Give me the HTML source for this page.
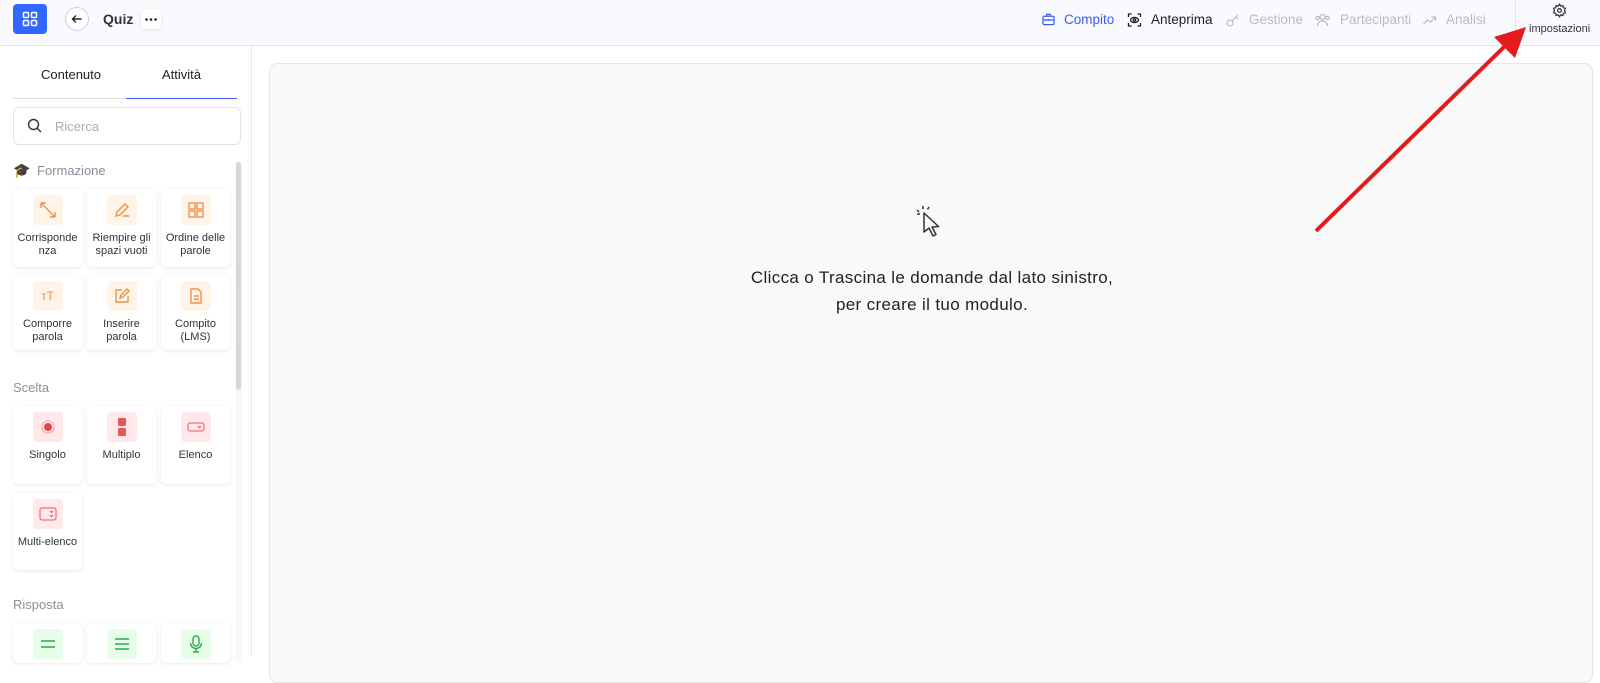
<!DOCTYPE html>
<html><head><meta charset="utf-8"><style>
*{box-sizing:border-box;margin:0;padding:0}
body{width:1600px;height:656px;overflow:hidden;background:#fff;font-family:"Liberation Sans",sans-serif;position:relative;color:#222}
.abs{position:absolute}
.hdr{left:0;top:0;width:1600px;height:46px;background:#fafafe;border-bottom:1px solid #e3e4ea}
.nav{top:12px;font-size:13.5px;display:flex;align-items:center;gap:9px;color:#bbb}
.card{position:absolute;width:69px;background:#fff;border-radius:5px;box-shadow:0 1px 4px rgba(0,0,0,.09);text-align:center;font-size:11px;color:#333;line-height:13px}
.ib{width:30px;height:30px;border-radius:4px;margin:6px auto 7px;display:flex;align-items:center;justify-content:center}
.o{background:#fff4e8}.r{background:#ffe9ea}.g{background:#e6fde9}
.sec{font-size:13px;color:#8a8f9c}
</style></head><body>
<div class="abs hdr"></div>
<div class="abs" style="left:13px;top:4px;width:34px;height:30px;background:#3366ff;border-radius:4px;display:flex;align-items:center;justify-content:center">
<svg width="16" height="16" viewBox="0 0 16 16" fill="none" stroke="#fff" stroke-width="1.5"><rect x="1.5" y="1.5" width="5" height="5" rx="1"/><rect x="9.5" y="1.5" width="5" height="5" rx="1"/><rect x="1.5" y="9.5" width="5" height="5" rx="1"/><rect x="9.5" y="9.5" width="5" height="5" rx="1"/></svg></div>
<div class="abs" style="left:65px;top:7px;width:24px;height:24px;border:1px solid #c9cff8;border-radius:50%;background:#fff;display:flex;align-items:center;justify-content:center"><svg width="12" height="12" viewBox="0 0 12 12" fill="none" stroke="#222" stroke-width="1.4"><path d="M10.5 6H1.5M5 2.5L1.5 6 5 9.5"/></svg></div>
<div class="abs" style="left:103px;top:11px;font-size:14px;font-weight:bold;color:#333">Quiz</div>
<div class="abs" style="left:141px;top:9px;width:20px;height:20px;background:#fff;border-radius:4px;box-shadow:0 1px 3px rgba(0,0,0,.1);display:flex;align-items:center;justify-content:center"><svg width="12" height="3"><circle cx="1.5" cy="1.5" r="1.3" fill="#222"/><circle cx="6" cy="1.5" r="1.3" fill="#222"/><circle cx="10.5" cy="1.5" r="1.3" fill="#222"/></svg></div>

<div class="abs nav" style="left:1042px;color:#3a5cf0"><svg width="13" height="13" viewBox="0 0 14 14" fill="none" stroke="#3a5cf0" stroke-width="1.3"><rect x="1" y="3.5" width="12" height="9" rx="1.5"/><path d="M5 3.5V1.5h4v2M1 7.5h12M7 6.5v2"/></svg><span>Compito</span></div>
<div class="abs nav" style="left:1127px;color:#222"><svg width="15" height="14" viewBox="0 0 14 14" fill="none" stroke="#222" stroke-width="1.3"><path d="M1 4V1h3M10 1h3v3M13 10v3h-3M4 13H1v-3"/><ellipse cx="7" cy="7" rx="4" ry="2.6"/><circle cx="7" cy="7" r="1.2"/></svg><span>Anteprima</span></div>
<div class="abs nav" style="left:1226px"><svg width="14" height="14" viewBox="0 0 14 14" fill="none" stroke="#bbb" stroke-width="1.2"><circle cx="4" cy="10" r="3"/><path d="M6 8l6-6M10 4l2 2"/></svg><span>Gestione</span></div>
<div class="abs nav" style="left:1314px"><svg width="17" height="14" viewBox="0 0 16 14" fill="none" stroke="#bbb" stroke-width="1.2"><circle cx="8" cy="4" r="2.5"/><path d="M3 13c0-3 2-5 5-5s5 2 5 5"/><circle cx="3" cy="5" r="1.6"/><circle cx="13" cy="5" r="1.6"/></svg><span>Partecipanti</span></div>
<div class="abs nav" style="left:1422px"><svg width="15" height="14" viewBox="0 0 14 14" fill="none" stroke="#bbb" stroke-width="1.2"><path d="M1 11l4-4 3 2 5-5M9 4h4v4"/></svg><span>Analisi</span></div>
<div class="abs" style="left:1515px;top:0;width:1px;height:45px;background:#e3e4ea"></div>
<svg class="abs" style="left:1552px;top:3px" width="15" height="15" viewBox="0 0 24 24" fill="none" stroke="#333" stroke-width="2"><circle cx="12" cy="12" r="3"/><path d="M12 2l2 3 3.5-1 .5 3.5 3.5 1-1.5 3.5 1.5 3.5-3.5 1-.5 3.5-3.5-1-2 3-2-3-3.5 1-.5-3.5-3.5-1 1.5-3.5L2.5 8.5l3.5-1 .5-3.5 3.5 1z"/></svg>
<div class="abs" style="left:1529px;top:23px;font-size:11px;color:#333">impostazioni</div>

<div class="abs" style="left:251px;top:46px;width:1px;height:610px;background:#e8e9ee"></div>
<div class="abs" style="left:269px;top:63px;width:1324px;height:620px;background:#f9f9f9;border:1px solid #e6e6ea;border-radius:8px"></div>

<div class="abs" style="left:41px;top:67px;font-size:13px">Contenuto</div>
<div class="abs" style="left:162px;top:67px;font-size:13px">Attività</div>
<div class="abs" style="left:13px;top:98px;width:113px;height:1px;background:#ddd"></div>
<div class="abs" style="left:126px;top:98px;width:111px;height:1px;background:#3a5cf0"></div>
<div class="abs" style="left:13px;top:107px;width:228px;height:38px;border:1px solid #dfe1e6;border-radius:6px"></div>
<svg class="abs" style="left:27px;top:118px" width="15" height="15" viewBox="0 0 15 15" fill="none" stroke="#333" stroke-width="1.4"><circle cx="6.5" cy="6.5" r="5"/><path d="M10.2 10.2L14 14"/></svg>
<div class="abs" style="left:55px;top:119px;font-size:13px;color:#aab">Ricerca</div>
<div class="abs" style="left:236px;top:162px;width:6px;height:500px;background:#f6f7f9"></div>
<div class="abs" style="left:236px;top:162px;width:5px;height:228px;background:#d5d8de;border-radius:3px"></div>

<div class="abs" style="left:13px;top:162px;font-size:14px">🎓</div>
<div class="abs sec" style="left:37px;top:163px">Formazione</div>

<div class="card" style="left:13px;top:189px;height:78px"><div class="ib o"><svg width="18" height="18" viewBox="0 0 18 18" fill="none" stroke="#f0904a" stroke-width="1.4"><path d="M2 2l14 14M2 2v5M2 2h5M16 16v-5M16 16h-5"/></svg></div>Corrisponde<br>nza</div>
<div class="card" style="left:87px;top:189px;height:78px"><div class="ib o"><svg width="18" height="18" viewBox="0 0 18 18" fill="none" stroke="#f0904a" stroke-width="1.4"><path d="M3 15l1-4 8-8 3 3-8 8zM10 15h6"/></svg></div>Riempire gli<br>spazi vuoti</div>
<div class="card" style="left:161px;top:189px;height:78px"><div class="ib o"><svg width="18" height="18" viewBox="0 0 18 18" fill="none" stroke="#f0904a" stroke-width="1.4"><rect x="2" y="2" width="6" height="6"/><rect x="10" y="2" width="6" height="6"/><rect x="2" y="10" width="6" height="6"/><rect x="10" y="10" width="6" height="6"/></svg></div>Ordine delle<br>parole</div>
<div class="card" style="left:13px;top:275px;height:75px"><div class="ib o"><span style="color:#f0904a;font-size:12px">ᴛT</span></div>Comporre<br>parola</div>
<div class="card" style="left:87px;top:275px;height:75px"><div class="ib o"><svg width="18" height="18" viewBox="0 0 18 18" fill="none" stroke="#f0904a" stroke-width="1.4"><path d="M9 3H3v12h12V9M7 11l1-3 6-6 2 2-6 6z"/></svg></div>Inserire<br>parola</div>
<div class="card" style="left:161px;top:275px;height:75px"><div class="ib o"><svg width="18" height="18" viewBox="0 0 18 18" fill="none" stroke="#f0904a" stroke-width="1.4"><path d="M4 2h7l3 3v11H4zM7 9h5M7 12h5"/></svg></div>Compito<br>(LMS)</div>

<div class="abs sec" style="left:13px;top:380px">Scelta</div>
<div class="card" style="left:13px;top:406px;height:78px"><div class="ib r"><svg width="16" height="16"><circle cx="8" cy="8" r="6" fill="none" stroke="#f4a0a0"/><circle cx="8" cy="8" r="4" fill="#e84545"/></svg></div>Singolo</div>
<div class="card" style="left:87px;top:406px;height:78px"><div class="ib r"><svg width="10" height="20"><rect x="1" y="1" width="8" height="8" rx="1.5" fill="#e85555"/><rect x="1" y="11" width="8" height="8" rx="1.5" fill="#e85555"/></svg></div>Multiplo</div>
<div class="card" style="left:161px;top:406px;height:78px"><div class="ib r"><svg width="18" height="10"><rect x="1" y="1" width="16" height="8" rx="2" fill="none" stroke="#e85555"/><path d="M11 4l1.5 1.5L14 4" stroke="#e85555" fill="none"/></svg></div>Elenco</div>
<div class="card" style="left:13px;top:493px;height:77px"><div class="ib r"><svg width="18" height="14"><rect x="1" y="1" width="16" height="12" rx="2" fill="none" stroke="#e85555"/><path d="M11 4l1.5 1.5L14 4M11 8l1.5 1.5L14 8" stroke="#e85555" fill="none"/></svg></div>Multi-elenco</div>

<div class="abs sec" style="left:13px;top:597px">Risposta</div>
<div class="card" style="left:13px;top:623px;height:40px"><div class="ib g"><svg width="14" height="8" stroke="#2eaa4a" stroke-width="1.5"><path d="M0 1h14M0 7h14"/></svg></div></div>
<div class="card" style="left:87px;top:623px;height:40px"><div class="ib g"><svg width="14" height="12" stroke="#2eaa4a" stroke-width="1.5"><path d="M0 1h14M0 6h14M0 11h14"/></svg></div></div>
<div class="card" style="left:161px;top:623px;height:40px"><div class="ib g"><svg width="14" height="18" fill="none" stroke="#2eaa4a" stroke-width="1.4"><rect x="4" y="1" width="6" height="10" rx="3"/><path d="M1.5 8a5.5 5.5 0 0011 0M7 13.5V17M4 17h6"/></svg></div></div>

<svg class="abs" style="left:915px;top:206px" width="30" height="36" viewBox="0 0 30 36" fill="none" stroke="#333" stroke-width="1.5"><path d="M9 7l0 19 5-4 4 8 3-1.5-4-7.5 6.5-0.5z" stroke-linejoin="round"/><path d="M8 0v3M2 4l2 2M14 1l-1.5 2.5M2 8h3"/></svg>
<div class="abs" style="left:582px;top:264px;width:700px;text-align:center;font-size:17px;letter-spacing:0.35px;line-height:27px;color:#222">Clicca o Trascina le domande dal lato sinistro,<br>per creare il tuo modulo.</div>

<svg class="abs" style="left:0;top:0" width="1600" height="656"><line x1="1316" y1="231" x2="1505" y2="46" stroke="#e31b1b" stroke-width="4"/><polygon points="1526,27 1515,58 1494,37" fill="#e31b1b"/></svg>
</body></html>
